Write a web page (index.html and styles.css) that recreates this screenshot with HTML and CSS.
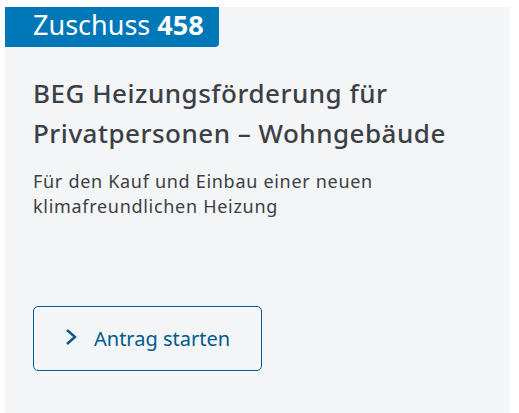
FILE: index.html
```html
<!DOCTYPE html>
<html lang="de">
<head>
<meta charset="utf-8">
<link rel="stylesheet" href="styles.css">
</head>
<body>
<div class="page">
  <article class="card">
    <div class="badge">Zuschuss <span class="num">458</span></div>
    <div class="content">
      <h2 class="title">BEG Heizungsförderung für Privatpersonen – Wohngebäude</h2>
      <p class="desc">Für den Kauf und Einbau einer neuen klimafreundlichen Heizung</p>
      <a class="btn" href="#">
        <svg class="chev" width="12" height="16" viewBox="0 0 12 16"><path d="M2 1 L10 8 L2 15" fill="none" stroke="currentColor" stroke-width="2.4"/></svg>
        <span>Antrag starten</span>
      </a>
    </div>
  </article>
</div>
</body>
</html>
```
FILE: styles.css
```css
html, body { margin: 0; padding: 0; background: #fff; }
.page { padding: 7px 9px 0 5px; font-family: "Noto Sans", "Open Sans", sans-serif; }
.card { background: #f4f5f7; min-height: 406px; }
.badge {
  display: inline-block;
  background: #0077b6;
  color: #fff;
  font-size: 27px;
  line-height: 35px;
  height: 35px;
  padding: 0 15px 5px 28px;
  border-bottom-right-radius: 4px;
}
.num { font-weight: 700; }
.content { padding: 26px 28px 0 28px; }
.title {
  margin: 0;
  font-size: 26px;
  font-weight: 500;
  letter-spacing: 0.5px;
  line-height: 40px;
  color: #3b4046;
}
.desc {
  margin: 16px 0 0 0;
  font-size: 18px;
  letter-spacing: 0.7px;
  line-height: 25px;
  color: #3b4046;
  max-width: 380px;
}
.btn {
  margin-top: 87px;
  width: 229px;
  height: 65px;
  box-sizing: border-box;
  border: 1px solid #005f98;
  border-radius: 5px;
  display: flex;
  align-items: center;
  padding-left: 31px;
  gap: 17px;
  text-decoration: none;
  color: #005a8f;
  font-size: 20px;
}
.chev { display: block; margin-bottom: 4px; }
```
